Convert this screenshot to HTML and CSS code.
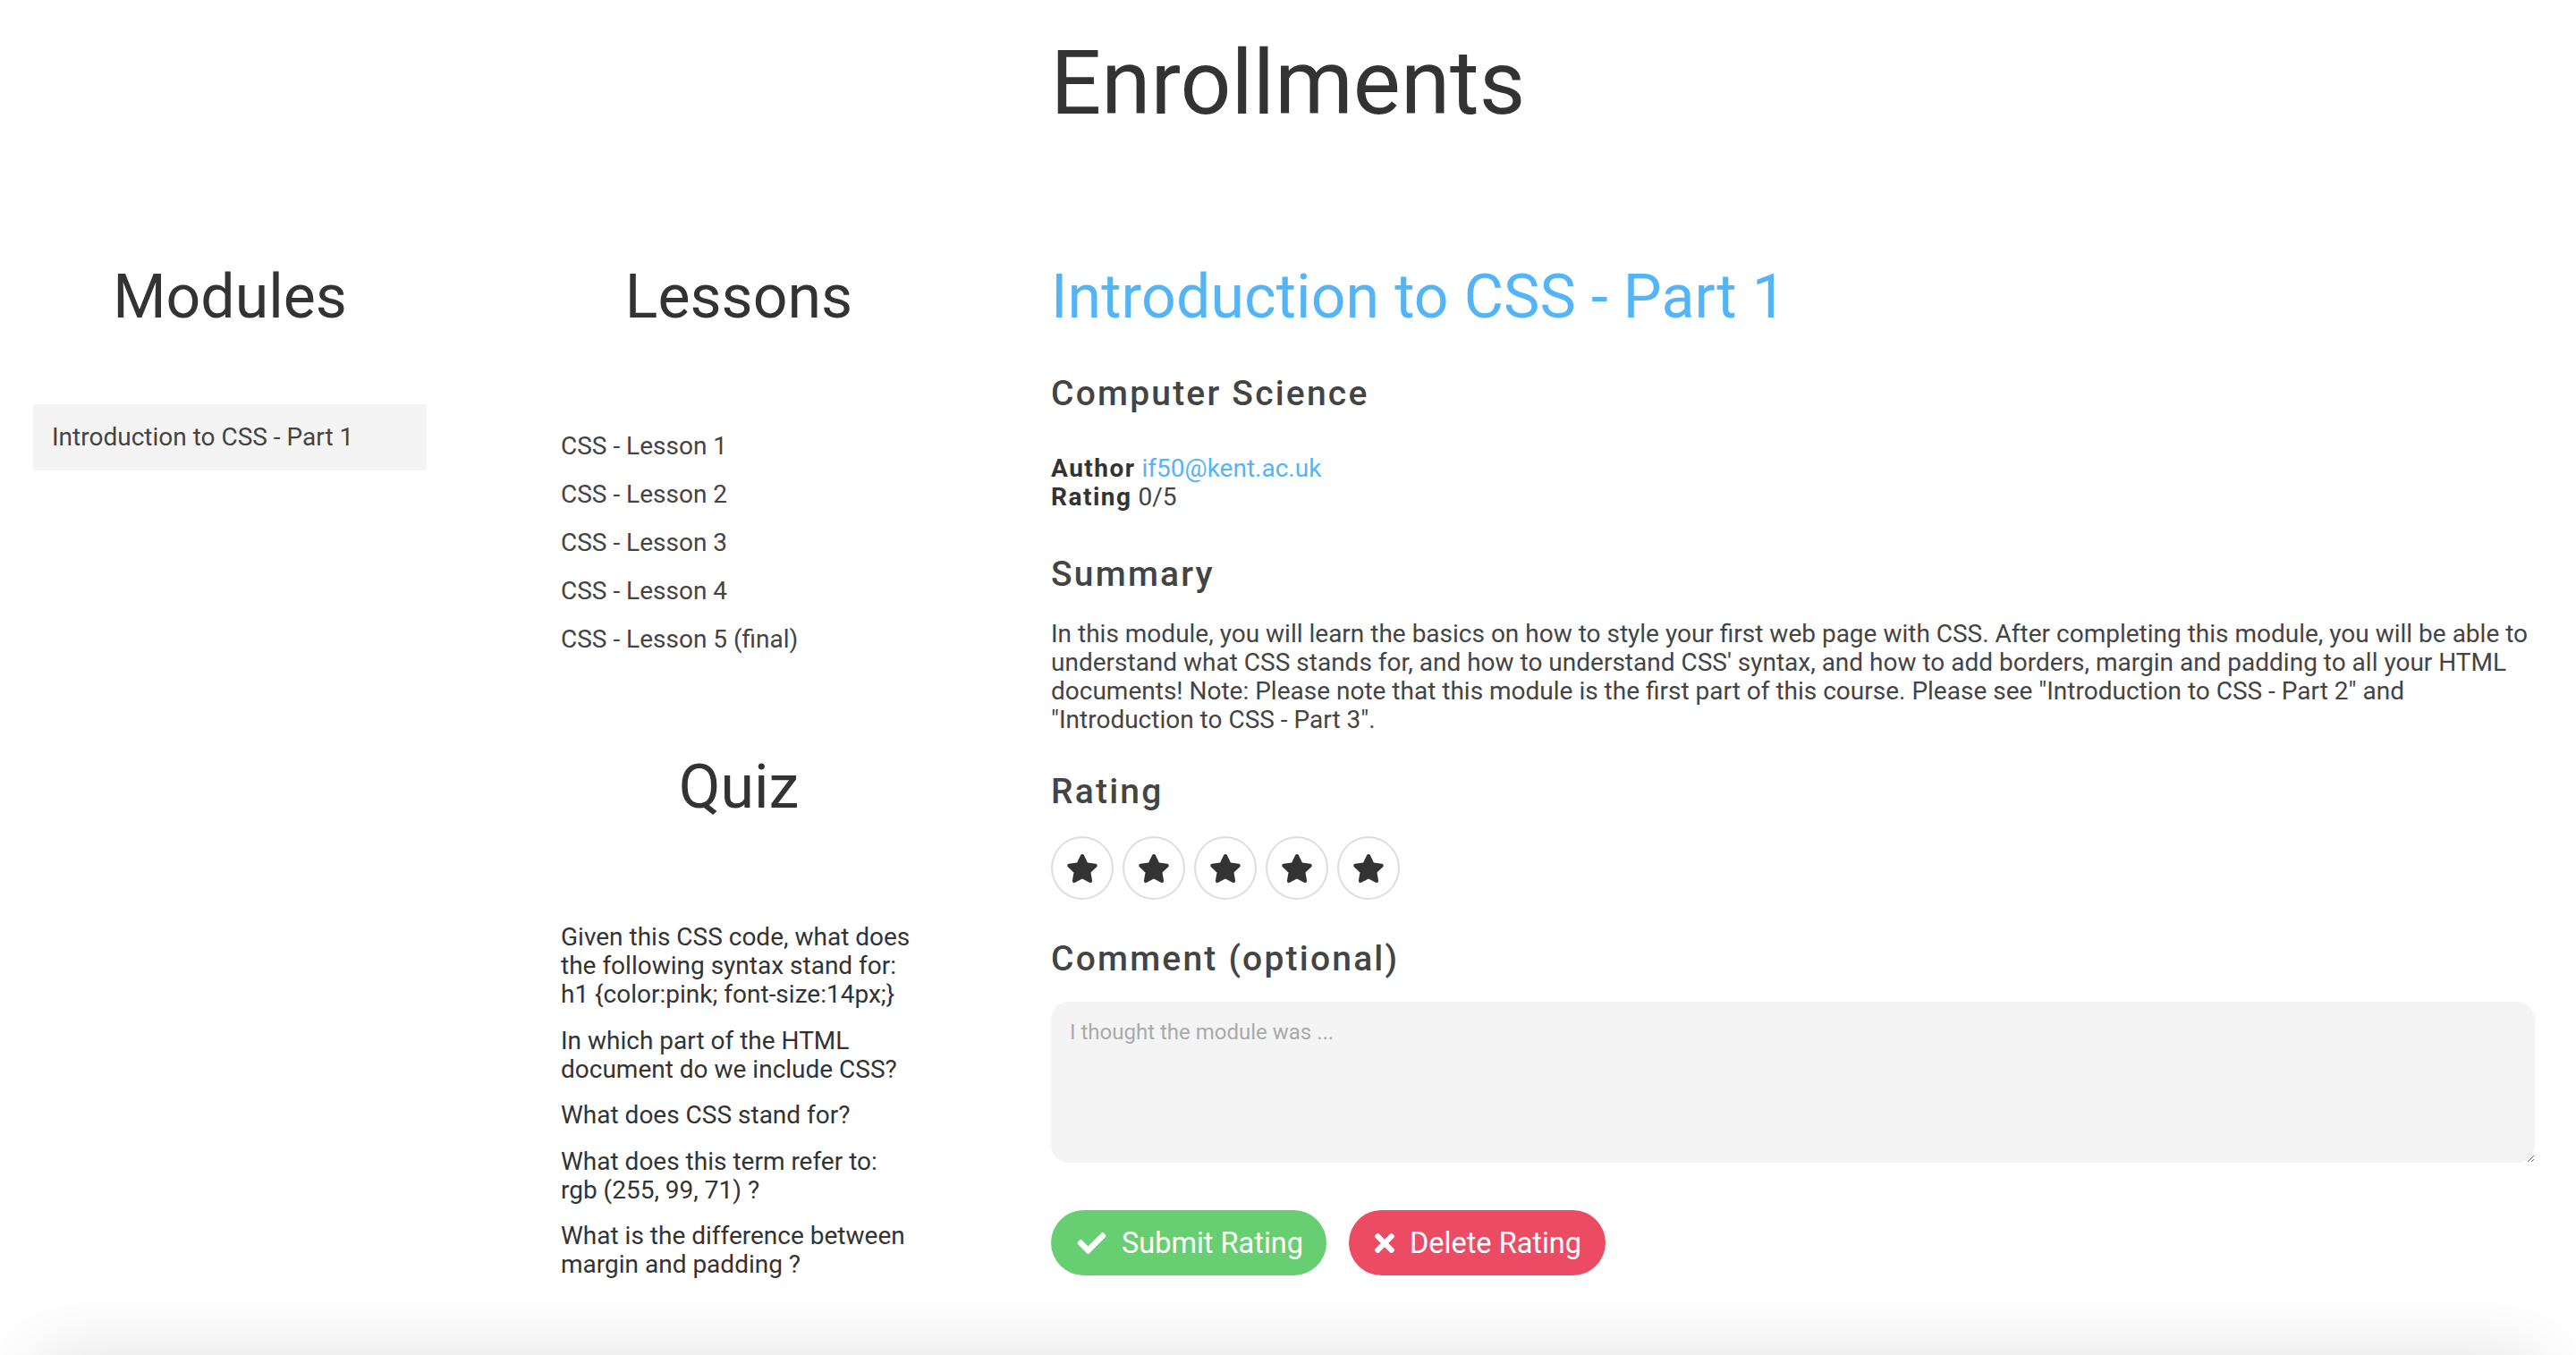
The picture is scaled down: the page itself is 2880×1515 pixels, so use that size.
FILE: index.html
```html
<!DOCTYPE html>
<html lang="en">
<head>
<meta charset="utf-8">
<title>Enrollments</title>
<link rel="stylesheet" href="styles.css">
</head>
<body>
<h1 class="page-title">Enrollments</h1>
<div class="layout">
  <section class="col col-modules">
    <h2 class="col-title">Modules</h2>
    <ul class="module-list">
      <li class="module-item">Introduction to CSS - Part 1</li>
    </ul>
  </section>
  <section class="col col-lessons">
    <h2 class="col-title">Lessons</h2>
    <ul class="lesson-list">
      <li class="lesson-item">CSS - Lesson 1</li>
      <li class="lesson-item">CSS - Lesson 2</li>
      <li class="lesson-item">CSS - Lesson 3</li>
      <li class="lesson-item">CSS - Lesson 4</li>
      <li class="lesson-item">CSS - Lesson 5 (final)</li>
    </ul>
    <h2 class="col-title quiz-title">Quiz</h2>
    <ul class="quiz-list">
      <li class="quiz-item">Given this CSS code, what does the following syntax stand for: h1 {color:pink; font-size:14px;}</li>
      <li class="quiz-item">In which part of the HTML document do we include CSS?</li>
      <li class="quiz-item">What does CSS stand for?</li>
      <li class="quiz-item">What does this term refer to: rgb (255, 99, 71) ?</li>
      <li class="quiz-item">What is the difference between margin and padding ?</li>
    </ul>
  </section>
  <main class="detail">
    <h2 class="detail-title">Introduction to CSS - Part 1</h2>
    <h3 class="section-title first">Computer Science</h3>
    <p class="meta"><strong>Author</strong> <a class="link" href="#">if50@kent.ac.uk</a><br><strong>Rating</strong> 0/5</p>
    <h3 class="section-title summary-title">Summary</h3>
    <p class="summary">In this module, you will learn the basics on how to style your first web page with CSS. After completing this module, you will be able to understand what CSS stands for, and how to understand CSS' syntax, and how to add borders, margin and padding to all your HTML documents! Note: Please note that this module is the first part of this course. Please see "Introduction to CSS - Part 2" and "Introduction to CSS - Part 3".</p>
    <h3 class="section-title rating-title">Rating</h3>
    <div class="stars">
      <button class="star" type="button"><svg viewBox="0 0 576 512" width="36" height="32"><path d="M259.3 17.8L194 150.2 47.9 171.5c-26.2 3.8-36.7 36.1-17.7 54.6l105.7 103-25 145.5c-4.5 26.3 23.2 46 46.4 33.7L288 439.6l130.7 68.7c23.2 12.2 50.9-7.4 46.4-33.7l-25-145.5 105.7-103c19-18.5 8.5-50.8-17.7-54.6L382 150.2 316.7 17.8c-11.7-23.6-45.6-23.9-57.4 0z"/></svg></button>
      <button class="star" type="button"><svg viewBox="0 0 576 512" width="36" height="32"><path d="M259.3 17.8L194 150.2 47.9 171.5c-26.2 3.8-36.7 36.1-17.7 54.6l105.7 103-25 145.5c-4.5 26.3 23.2 46 46.4 33.7L288 439.6l130.7 68.7c23.2 12.2 50.9-7.4 46.4-33.7l-25-145.5 105.7-103c19-18.5 8.5-50.8-17.7-54.6L382 150.2 316.7 17.8c-11.7-23.6-45.6-23.9-57.4 0z"/></svg></button>
      <button class="star" type="button"><svg viewBox="0 0 576 512" width="36" height="32"><path d="M259.3 17.8L194 150.2 47.9 171.5c-26.2 3.8-36.7 36.1-17.7 54.6l105.7 103-25 145.5c-4.5 26.3 23.2 46 46.4 33.7L288 439.6l130.7 68.7c23.2 12.2 50.9-7.4 46.4-33.7l-25-145.5 105.7-103c19-18.5 8.5-50.8-17.7-54.6L382 150.2 316.7 17.8c-11.7-23.6-45.6-23.9-57.4 0z"/></svg></button>
      <button class="star" type="button"><svg viewBox="0 0 576 512" width="36" height="32"><path d="M259.3 17.8L194 150.2 47.9 171.5c-26.2 3.8-36.7 36.1-17.7 54.6l105.7 103-25 145.5c-4.5 26.3 23.2 46 46.4 33.7L288 439.6l130.7 68.7c23.2 12.2 50.9-7.4 46.4-33.7l-25-145.5 105.7-103c19-18.5 8.5-50.8-17.7-54.6L382 150.2 316.7 17.8c-11.7-23.6-45.6-23.9-57.4 0z"/></svg></button>
      <button class="star" type="button"><svg viewBox="0 0 576 512" width="36" height="32"><path d="M259.3 17.8L194 150.2 47.9 171.5c-26.2 3.8-36.7 36.1-17.7 54.6l105.7 103-25 145.5c-4.5 26.3 23.2 46 46.4 33.7L288 439.6l130.7 68.7c23.2 12.2 50.9-7.4 46.4-33.7l-25-145.5 105.7-103c19-18.5 8.5-50.8-17.7-54.6L382 150.2 316.7 17.8c-11.7-23.6-45.6-23.9-57.4 0z"/></svg></button>
    </div>
    <h3 class="section-title comment-title">Comment (optional)</h3>
    <textarea class="comment" placeholder="I thought the module was ..."></textarea>
    <div class="actions">
      <button class="btn btn-submit" type="button"><svg class="btn-icon" viewBox="0 64 512 384" width="33" height="24"><path d="M173.898 439.404l-166.4-166.4c-9.997-9.997-9.997-26.206 0-36.204l36.203-36.204c9.997-9.998 26.207-9.998 36.204 0L192 312.69 432.095 72.596c9.997-9.997 26.207-9.997 36.204 0l36.203 36.204c9.997 9.997 9.997 26.206 0 36.204l-294.4 294.401c-9.998 9.997-26.207 9.997-36.204-.001z"/></svg><span>Submit Rating</span></button>
      <button class="btn btn-delete" type="button"><svg class="btn-icon" viewBox="0 70 352 372" width="22" height="24"><path d="M242.72 256l100.07-100.07c12.28-12.28 12.28-32.19 0-44.48l-22.24-22.24c-12.28-12.28-32.19-12.28-44.48 0L176 189.28 75.93 89.21c-12.28-12.28-32.19-12.28-44.48 0L9.21 111.45c-12.28 12.28-12.28 32.19 0 44.48L109.28 256 9.21 356.07c-12.28 12.28-12.28 32.19 0 44.48l22.24 22.24c12.28 12.28 32.2 12.28 44.48 0L176 322.72l100.07 100.07c12.28 12.28 32.2 12.28 44.48 0l22.24-22.24c12.28-12.28 12.28-32.19 0-44.48L242.72 256z"/></svg><span>Delete Rating</span></button>
    </div>
  </main>
</div>
<footer class="footer"></footer>
</body>
</html>
```
FILE: styles.css
```css
* { box-sizing: border-box; }

html, body {
  margin: 0;
  padding: 0;
  background: #fff;
}

body {
  font-family: Roboto, "Liberation Sans", Arial, sans-serif;
  font-size: 28px;
  line-height: 32px;
  color: #444;
  overflow: hidden;
}

ul {
  list-style: none;
  margin: 0;
  padding: 0;
}

p { margin: 0; }

.page-title {
  margin: 35px 0 0;
  text-align: center;
  font-size: 100px;
  line-height: 115px;
  font-weight: 400;
  color: #333;
}

.layout {
  display: flex;
  align-items: flex-start;
  gap: 150px;
  margin-top: 141px;
  padding: 0 46px 0 37px;
}

.col-modules {
  width: 440px;
  flex: none;
}

.col-lessons {
  width: 398px;
  flex: none;
}

.col-title {
  margin: 0;
  text-align: center;
  font-size: 68px;
  line-height: 82px;
  font-weight: 400;
  color: #333;
}

.module-list {
  margin-top: 79px;
}

.module-item {
  background: #f4f4f4;
  padding: 21px;
  color: #444;
}

.lesson-list {
  margin-top: 110px;
  display: flex;
  flex-direction: column;
  gap: 22px;
}

.quiz-title {
  margin-top: 108px;
}

.quiz-list {
  margin-top: 111px;
  max-width: 392px;
  display: flex;
  flex-direction: column;
  gap: 19.5px;
  color: #333;
}

.detail {
  flex: 1;
  min-width: 0;
}

.detail-title {
  margin: 0;
  font-size: 68px;
  line-height: 82px;
  font-weight: 400;
  letter-spacing: 0.1px;
  color: #53b5f7;
}

.section-title {
  margin: 0;
  font-size: 39px;
  line-height: 44px;
  font-weight: 500;
  letter-spacing: 2.2px;
  color: #444;
}

.section-title.first { margin-top: 45px; }
.summary-title { margin-top: 48px; }
.rating-title { margin-top: 42px; }
.comment-title { margin-top: 44px; }

.meta {
  margin-top: 46px;
}

.meta strong {
  font-weight: 700;
  color: #333;
  letter-spacing: 1.5px;
}

.link {
  color: #53b5f7;
  text-decoration: none;
}

.summary {
  margin-top: 29px;
}

.stars {
  display: flex;
  gap: 10px;
  margin-top: 28px;
}

.star {
  width: 70px;
  height: 71px;
  border-radius: 50%;
  border: 2px solid #dddddd;
  background: #fff;
  padding: 0;
  display: flex;
  align-items: center;
  justify-content: center;
  fill: #333;
}

.comment {
  display: block;
  width: 100%;
  height: 180px;
  margin-top: 26px;
  border: none;
  border-radius: 20px;
  background: #f4f4f4;
  padding: 18px 21px;
  font-family: Roboto, "Liberation Sans", Arial, sans-serif;
  font-size: 24px;
  line-height: 32px;
  color: #444;
  outline: none;
}

.comment::placeholder {
  color: #aaaaaa;
}

.actions {
  display: flex;
  gap: 25px;
  margin-top: 53px;
}

.btn {
  height: 73px;
  border: none;
  border-radius: 37px;
  display: inline-flex;
  align-items: center;
  gap: 17px;
  font-family: Roboto, "Liberation Sans", Arial, sans-serif;
  font-size: 32.5px;
  font-weight: 400;
  color: #fff;
  fill: #fff;
  cursor: pointer;
}

.btn-submit {
  background: #67cf72;
  padding: 0 26px 0 29px;
}

.btn-delete {
  background: #eb4c64;
  padding: 0 27px 0 29px;
}

.btn-icon {
  flex: none;
}

.footer {
  height: 200px;
  margin: 85px 40px 0;
  background: #fff;
  box-shadow: 0 0 80px rgba(0, 0, 0, 0.12);
}
```
